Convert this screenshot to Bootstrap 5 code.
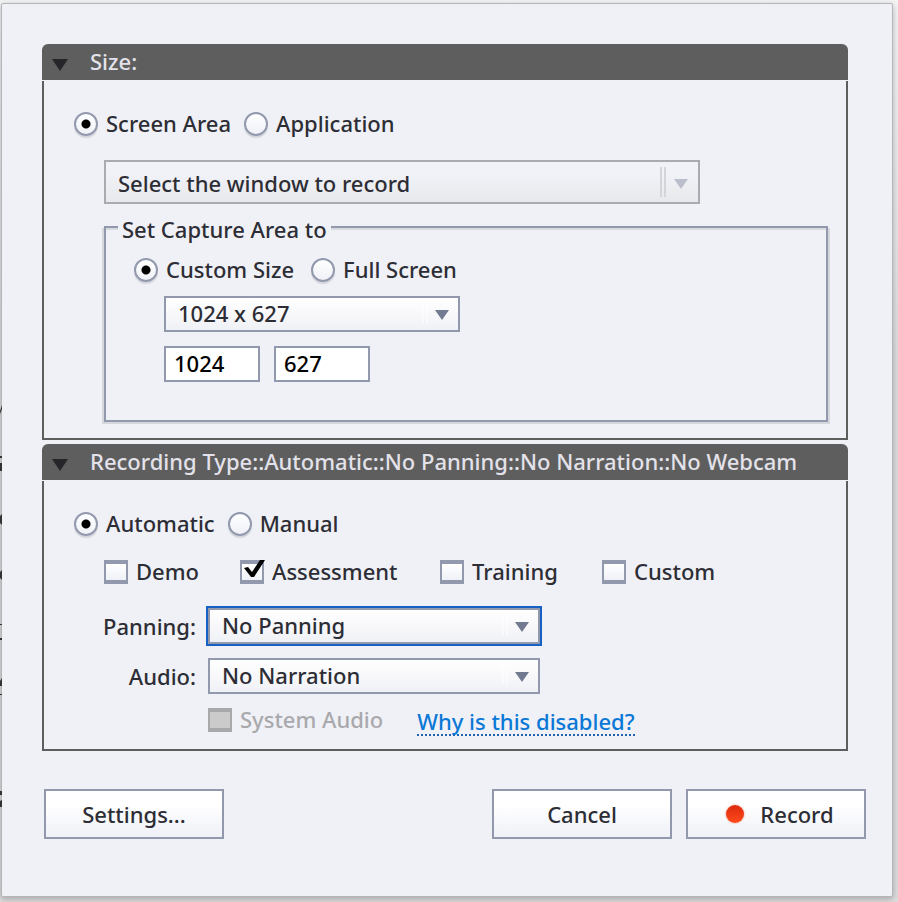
<!DOCTYPE html>
<html lang="en">
<head>
<meta charset="utf-8">
<meta name="viewport" content="width=device-width, initial-scale=1">
<title>Record</title>
<link href="https://cdn.jsdelivr.net/npm/bootstrap@5.3.0/dist/css/bootstrap.min.css" rel="stylesheet">
<style>
  :root { --edge: #9299ad; --ink: #2d2d35; --panel-dark: #5e5e5e; }
  body {
    background: linear-gradient(#f3f3f3, #dcdcdc 40%);
    color: var(--ink);
    font-family: "Noto Sans", "Open Sans", sans-serif; font-size: 22px; font-weight: 500; line-height: 28px;
    padding: 3px 5px 5px 1px;
  }
  .page-marks { left: 0; top: 400px; width: 2px; height: 420px; }
  .dialog-window {
    background: #f0f1f6; border: 1px solid #b4b6b9; border-radius: 2px;
    box-shadow: 0 2px 6px rgba(0,0,0,.25);
    min-height: calc(100vh - 8px); padding: 40px 44px 40px 40px;
  }
  .section-head {
    background: var(--panel-dark); color: #e3e2ea; height: 36px; padding: 0 10px;
    border: 0; border-radius: 6px 6px 0 0; gap: 22px; text-align: left; margin-bottom: 1px;
    font-weight: 500;
  }
  .section-head span, .choice label, .capture-title { padding-bottom: 2px; }
  .section-head svg { width: 16px; height: 12px; margin-top: 6px; flex: none; }
  .section-body { border: 2px solid var(--panel-dark); border-top: 0; margin-bottom: 4px; }
  .size-body { padding: 28px 18px 16px 30px; }
  .type-body { padding: 28px 18px 14px 30px; }
  .indent { margin-left: 30px; }
  .choice { gap: 8px; white-space: nowrap; }
  .choices { gap: 13px; }
  .choice input {
    appearance: none; width: 24px; height: 24px; margin: 0; flex: none;
    background: linear-gradient(#fff, #eff1f7); border: 2px solid var(--edge);
  }
  .choice input[type=radio] { border-radius: 50%; box-shadow: 0 2px 1px #d3d5dc; }
  .choice input[type=radio]:checked {
    background: radial-gradient(circle, #000 4px, transparent 5px), linear-gradient(#fff, #eff1f7);
  }
  .choice input[type=checkbox] { border-top-width: 4px; border-bottom-width: 4px; }
  .choice input[type=checkbox]:disabled { background: #cbcbcb; border-color: #a9a9a9; }
  .choice input:disabled + label { color: #a9a9ad; }
  .tick { left: 4px; top: 1px; width: 24px; height: 20px; pointer-events: none; }
  .checks { display: grid; grid-template-columns: 136px 200px 162px auto; margin-top: 18px; }
  .pick {
    appearance: none; height: 36px; color: var(--ink); border: 2px solid var(--edge); border-radius: 0;
    padding: 0 44px 2px 12px; line-height: 28px; font-weight: 500; max-width: 100%;
    background:
      url("data:image/svg+xml,%3Csvg xmlns='http://www.w3.org/2000/svg' width='28' height='30'%3E%3Cpath d='M1 6v18M5 6v18' stroke='%23fff' stroke-width='2' opacity='.5'/%3E%3Cpath d='M13 11h14L20 21z' fill='%23727a92'/%3E%3C/svg%3E") right 8px center / 28px 30px no-repeat,
      linear-gradient(#fff, #f0f1f6);
  }
  .pick-off {
    height: 44px; width: 596px; border-color: #a9abb0; opacity: 1; padding-top: 4px; margin-top: 21px;
    background:
      url("data:image/svg+xml,%3Csvg xmlns='http://www.w3.org/2000/svg' width='28' height='30'%3E%3Cpath d='M1 0v30M5 0v30' stroke='%23d3d5da' stroke-width='2'/%3E%3Cpath d='M14 12h14L21 22z' fill='%23bbbfcd'/%3E%3C/svg%3E") right 10px center / 28px 30px no-repeat,
      linear-gradient(#f1f2f7 30%, #e8e9ec);
  }
  .pick-size { width: 296px; }
  .pick-row { width: 332px; }
  .pick-focus { outline: 2px solid #1660c4; }
  .capture {
    border: 2px solid var(--edge); box-shadow: 0 2px 0 #d6d7dc, 2px 2px 0 #d6d7dc, -2px 2px 0 #d6d7dc, inset 0 2px 0 #d9dadf;
    margin-top: 22px; min-height: 196px; padding: 0 28px;
  }
  .capture-title { background: #f0f1f6; padding-left: 4px; padding-right: 4px; margin: -13px 0 0 -16px; width: max-content; }
  .capture-choices { margin-top: 10px; gap: 17px; }
  .capture-fields { margin-top: 11px; }
  .sizes { gap: 14px; margin-top: 14px; }
  .num { width: 96px; height: 36px; border: 2px solid var(--edge); padding: 0 8px 2px; color: #000; background: #fff; line-height: 28px; font-weight: 500; }
  .rows { display: grid; grid-template-columns: 92px auto; column-gap: 12px; row-gap: 14px; margin-top: 21px; align-items: center; }
  .rows > label { justify-self: end; white-space: nowrap; }
  .audio-row { grid-column: 2; gap: 34px; margin-top: -3px; height: 30px; }
  .why { color: #0a78d6; text-decoration: none; border-bottom: 2px dotted #1f62b0; line-height: 26px; white-space: nowrap; margin-top: 3px; }
  .actions { margin: 38px -18px 0 2px; gap: 14px; }
  .cmd {
    width: 180px; height: 50px; border: 2px solid var(--edge); border-radius: 0; color: var(--ink);
    background: linear-gradient(#fff 30%, #eff1f7); font-size: 22px; font-weight: 500; line-height: 28px; padding: 0;
  }
  .cmd-record { padding-left: 8px; }
  .dot { width: 18px; height: 18px; border-radius: 50%; background: linear-gradient(#dc2a0c, #ff4a1c); box-shadow: 0 0 2px #f0765a; }
</style>
<script src="https://cdn.jsdelivr.net/npm/bootstrap@5.3.0/dist/js/bootstrap.bundle.min.js"></script>
</head>
<body>
<main class="dialog-window">
  <form>
    <section>
      <button type="button" class="section-head d-flex align-items-center w-100">
        <svg viewBox="0 0 16 12" aria-hidden="true"><path d="M0 0h16L8 12z" fill="#25252a"/></svg><span>Size:</span>
      </button>
      <div class="section-body size-body">
        <div class="choices d-flex">
          <div class="choice d-flex align-items-center"><input type="radio" name="area" id="screen" checked><label for="screen">Screen Area</label></div>
          <div class="choice d-flex align-items-center"><input type="radio" name="area" id="app"><label for="app">Application</label></div>
        </div>
        <div class="indent">
          <select class="pick pick-off d-block" aria-label="Window" disabled><option>Select the window to record</option></select>
          <div class="capture" role="group" aria-labelledby="capture-title">
            <div class="capture-title" id="capture-title">Set Capture Area to</div>
            <div class="choices capture-choices d-flex">
              <div class="choice d-flex align-items-center"><input type="radio" name="cap" id="custom-size" checked><label for="custom-size">Custom Size</label></div>
              <div class="choice d-flex align-items-center"><input type="radio" name="cap" id="full"><label for="full">Full Screen</label></div>
            </div>
            <div class="indent capture-fields">
              <select class="pick pick-size d-block" aria-label="Preset size"><option>1024 x 627</option></select>
              <div class="sizes d-flex">
                <input class="num" type="text" aria-label="Width" value="1024">
                <input class="num" type="text" aria-label="Height" value="627">
              </div>
            </div>
          </div>
        </div>
      </div>
    </section>
    <section>
      <button type="button" class="section-head d-flex align-items-center w-100">
        <svg viewBox="0 0 16 12" aria-hidden="true"><path d="M0 0h16L8 12z" fill="#25252a"/></svg><span>Recording Type::Automatic::No Panning::No Narration::No Webcam</span>
      </button>
      <div class="section-body type-body">
        <div class="choices d-flex">
          <div class="choice d-flex align-items-center"><input type="radio" name="mode" id="auto" checked><label for="auto">Automatic</label></div>
          <div class="choice d-flex align-items-center"><input type="radio" name="mode" id="manual"><label for="manual">Manual</label></div>
        </div>
        <div class="checks indent">
          <div class="choice d-flex align-items-center"><input type="checkbox" id="demo"><label for="demo">Demo</label></div>
          <div class="choice d-flex align-items-center position-relative"><input type="checkbox" id="assess" checked><label for="assess">Assessment</label>
            <svg class="tick position-absolute" viewBox="0 0 24 20" aria-hidden="true"><path d="M0 10 4 9 8 14 16 2 21 2 10 19 7 19z" fill="#000"/></svg></div>
          <div class="choice d-flex align-items-center"><input type="checkbox" id="training"><label for="training">Training</label></div>
          <div class="choice d-flex align-items-center"><input type="checkbox" id="custom"><label for="custom">Custom</label></div>
        </div>
        <div class="rows indent">
          <label for="panning">Panning:</label>
          <select id="panning" class="pick pick-row pick-focus"><option>No Panning</option></select>
          <label for="audio">Audio:</label>
          <select id="audio" class="pick pick-row"><option>No Narration</option></select>
          <div class="audio-row d-flex align-items-center">
            <div class="choice d-flex align-items-center"><input type="checkbox" id="sys" disabled><label for="sys">System Audio</label></div>
            <a class="why" href="#">Why is this disabled?</a>
          </div>
        </div>
      </div>
    </section>
    <div class="actions d-flex">
      <button type="button" class="cmd btn me-auto">Settings...</button>
      <button type="button" class="cmd btn">Cancel</button>
      <button type="submit" class="cmd cmd-record btn d-flex align-items-center justify-content-center gap-3"><span class="dot"></span>Record</button>
    </div>
  </form>
</main>
<!-- Slivers of the page behind the dialog -->
<svg class="page-marks position-absolute" viewBox="0 0 2 420" aria-hidden="true">
  <path d="M0 11 2 5v4L0 14zM0 56h2v2H0zM0 63h2v8H0zM0 116l2-2v11l-2-2zM0 172l2-2v10l-2-2zM0 224h2v1H0zM0 238h2v2H0zM0 281l2-3v8H0zM0 294h2v1H0zM0 391h2v4H0zM0 401l2-1v7H0z" fill="#333"/>
</svg>
</body>
</html>
